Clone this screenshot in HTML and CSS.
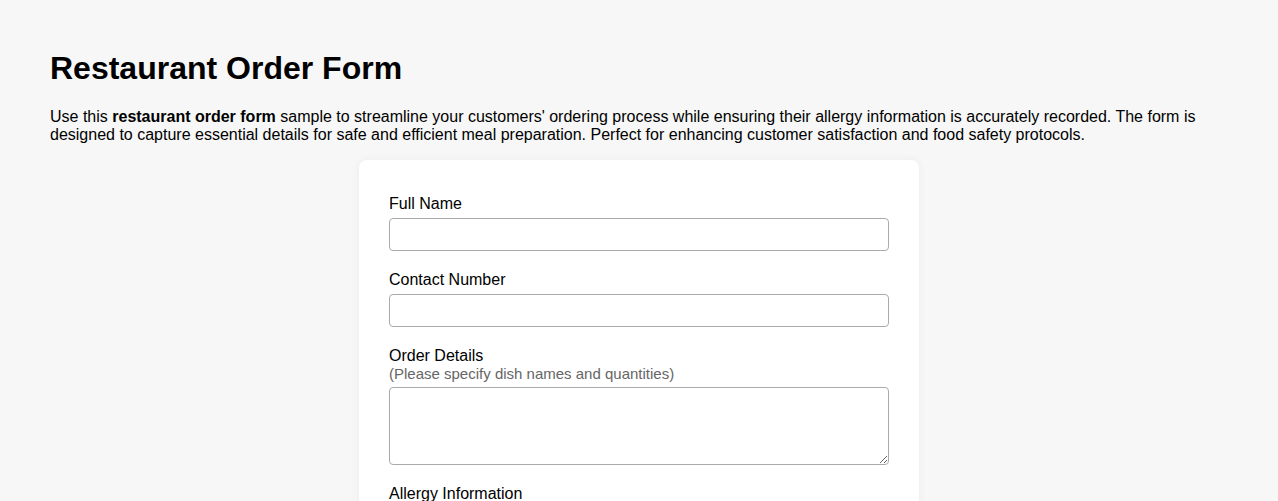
FILE: index.html
```html
<!DOCTYPE html>
<html lang="en">
<head>
    <meta charset="UTF-8">
    <meta name="viewport" content="width=device-width, initial-scale=1.0">
    <title>Restaurant Order Form</title>
    <link rel="stylesheet" href="styles.css">
</head>
<body>
    <h1>Restaurant Order Form</h1>
    <p>Use this <strong>restaurant order form</strong> sample to streamline your customers' ordering process while ensuring their allergy information is accurately recorded. The form is designed to capture essential details for safe and efficient meal preparation. Perfect for enhancing customer satisfaction and food safety protocols.</p>

    <form class="order-form">
        <div class="form-group">
            <label for="fullName">Full Name</label>
            <input type="text" id="fullName" name="fullName">
        </div>
        <div class="form-group">
            <label for="contactNumber">Contact Number</label>
            <input type="tel" id="contactNumber" name="contactNumber">
        </div>
        <div class="form-group">
            <label for="orderDetails" class="with-hint">Order Details<br><span class="hint">(Please specify dish names and quantities)</span></label>
            <textarea id="orderDetails" name="orderDetails"></textarea>
        </div>
        <div class="form-group">
            <label for="allergyInfo">Allergy Information</label>
            <textarea id="allergyInfo" name="allergyInfo"></textarea>
        </div>
    </form>
</body>
</html>
```

FILE: styles.css
```css
body {
    font-family: "Liberation Sans", Arial, sans-serif;
    margin: 0;
    padding: 29px 50px;
    background-color: #f7f7f7;
    color: #000;
}

h1 {
    font-size: 32px;
    margin: 21px 0;
}

p {
    font-size: 16px;
    margin: 16px 0;
}

.order-form {
    max-width: 500px;
    margin: 0 auto;
    padding: 35px 30px 30px;
    background-color: #fff;
    border-radius: 8px;
    box-shadow: 0 0 10px rgba(0, 0, 0, 0.05);
}

.form-group {
    margin-bottom: 20px;
}

label {
    display: block;
    margin-bottom: 5px;
    font-size: 16px;
}

label.with-hint {
    margin-bottom: 4px;
}

.hint {
    font-size: 15px;
    color: #666;
}

input, textarea {
    display: block;
    width: 100%;
    box-sizing: border-box;
    padding: 8px;
    border: 1px solid #aaa;
    border-radius: 4px;
    font-size: 13px;
    font-family: "Liberation Sans", Arial, sans-serif;
    background: #fff;
}

input {
    height: 33px;
}

textarea {
    height: 78px;
}
```
